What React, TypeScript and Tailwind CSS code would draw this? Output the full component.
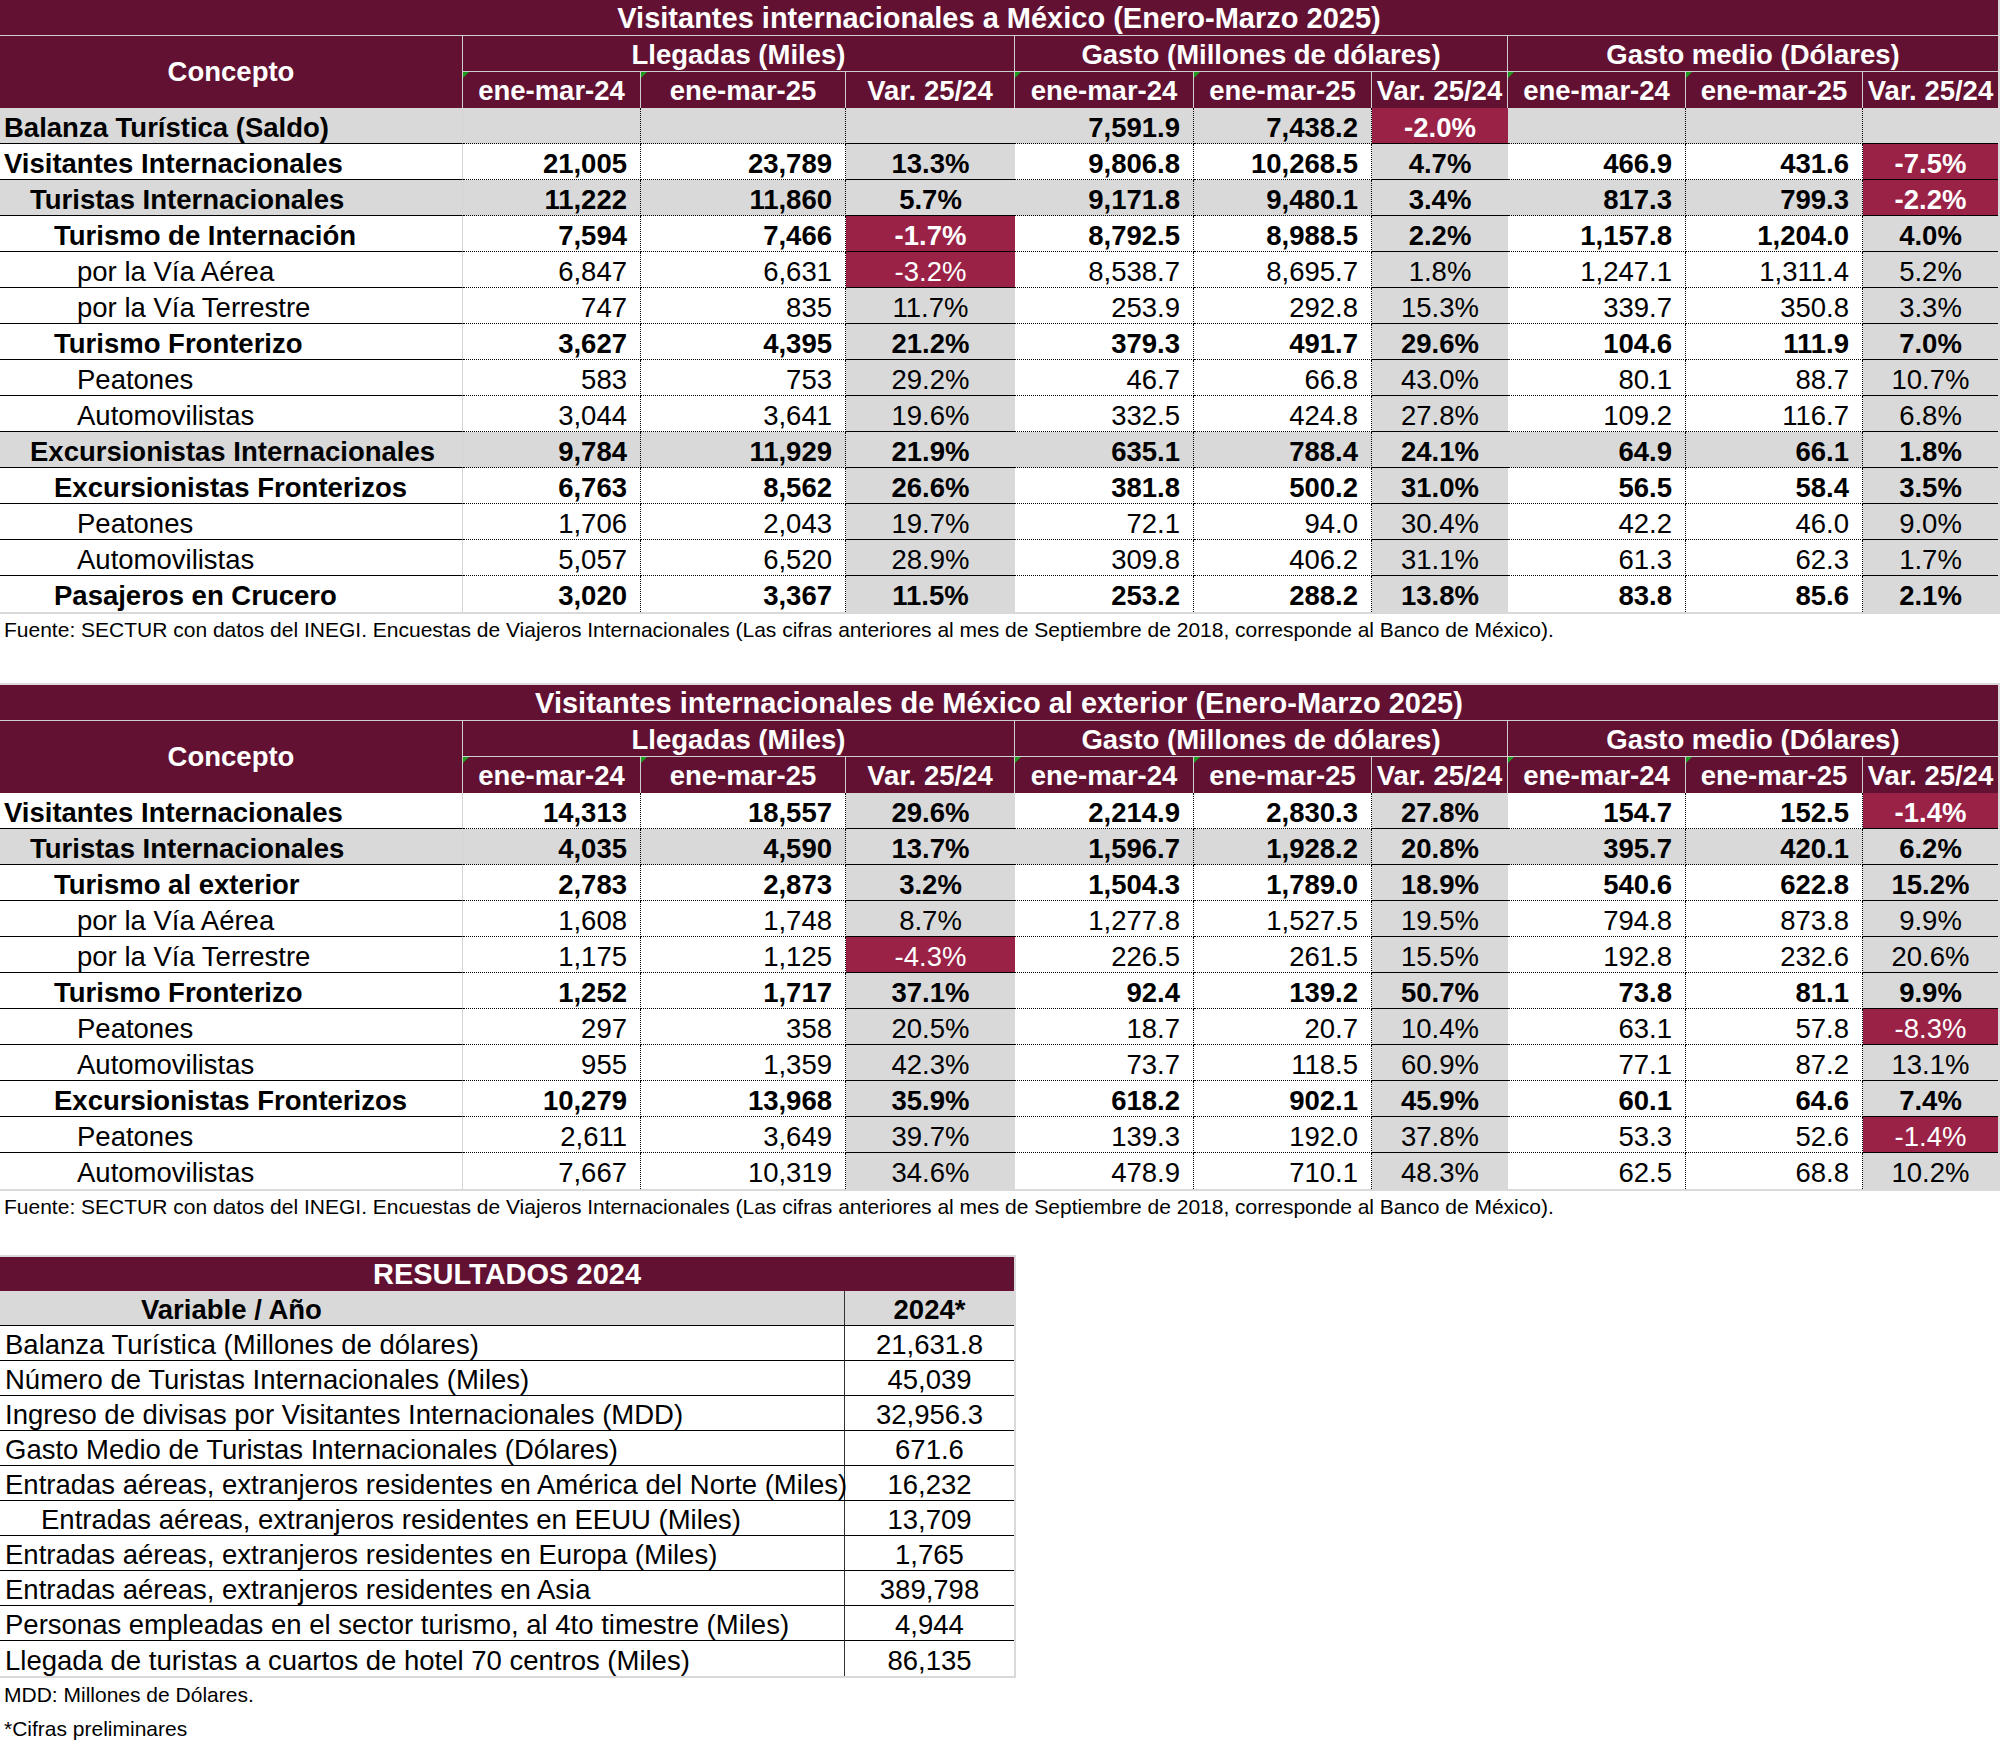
import React from "react";

type Row = {
    label: string;
    level: 0 | 1 | 2 | 3;
    gray?: boolean;
    vals: string[];
    neg?: number[];
};

const tablaEntrada: Row[] = [
    { label: "Balanza Turística (Saldo)", level: 0, gray: true, vals: ["", "", "", "7,591.9", "7,438.2", "-2.0%", "", "", ""], neg: [5] },
    { label: "Visitantes Internacionales", level: 0, vals: ["21,005", "23,789", "13.3%", "9,806.8", "10,268.5", "4.7%", "466.9", "431.6", "-7.5%"], neg: [8] },
    { label: "Turistas Internacionales", level: 1, gray: true, vals: ["11,222", "11,860", "5.7%", "9,171.8", "9,480.1", "3.4%", "817.3", "799.3", "-2.2%"], neg: [8] },
    { label: "Turismo de Internación", level: 2, vals: ["7,594", "7,466", "-1.7%", "8,792.5", "8,988.5", "2.2%", "1,157.8", "1,204.0", "4.0%"], neg: [2] },
    { label: "por la Vía Aérea", level: 3, vals: ["6,847", "6,631", "-3.2%", "8,538.7", "8,695.7", "1.8%", "1,247.1", "1,311.4", "5.2%"], neg: [2] },
    { label: "por la Vía Terrestre", level: 3, vals: ["747", "835", "11.7%", "253.9", "292.8", "15.3%", "339.7", "350.8", "3.3%"] },
    { label: "Turismo Fronterizo", level: 2, vals: ["3,627", "4,395", "21.2%", "379.3", "491.7", "29.6%", "104.6", "111.9", "7.0%"] },
    { label: "Peatones", level: 3, vals: ["583", "753", "29.2%", "46.7", "66.8", "43.0%", "80.1", "88.7", "10.7%"] },
    { label: "Automovilistas", level: 3, vals: ["3,044", "3,641", "19.6%", "332.5", "424.8", "27.8%", "109.2", "116.7", "6.8%"] },
    { label: "Excursionistas Internacionales", level: 1, gray: true, vals: ["9,784", "11,929", "21.9%", "635.1", "788.4", "24.1%", "64.9", "66.1", "1.8%"] },
    { label: "Excursionistas Fronterizos", level: 2, vals: ["6,763", "8,562", "26.6%", "381.8", "500.2", "31.0%", "56.5", "58.4", "3.5%"] },
    { label: "Peatones", level: 3, vals: ["1,706", "2,043", "19.7%", "72.1", "94.0", "30.4%", "42.2", "46.0", "9.0%"] },
    { label: "Automovilistas", level: 3, vals: ["5,057", "6,520", "28.9%", "309.8", "406.2", "31.1%", "61.3", "62.3", "1.7%"] },
    { label: "Pasajeros en Crucero", level: 2, vals: ["3,020", "3,367", "11.5%", "253.2", "288.2", "13.8%", "83.8", "85.6", "2.1%"] },
];

const tablaSalida: Row[] = [
    { label: "Visitantes Internacionales", level: 0, vals: ["14,313", "18,557", "29.6%", "2,214.9", "2,830.3", "27.8%", "154.7", "152.5", "-1.4%"], neg: [8] },
    { label: "Turistas Internacionales", level: 1, gray: true, vals: ["4,035", "4,590", "13.7%", "1,596.7", "1,928.2", "20.8%", "395.7", "420.1", "6.2%"] },
    { label: "Turismo al exterior", level: 2, vals: ["2,783", "2,873", "3.2%", "1,504.3", "1,789.0", "18.9%", "540.6", "622.8", "15.2%"] },
    { label: "por la Vía Aérea", level: 3, vals: ["1,608", "1,748", "8.7%", "1,277.8", "1,527.5", "19.5%", "794.8", "873.8", "9.9%"] },
    { label: "por la Vía Terrestre", level: 3, vals: ["1,175", "1,125", "-4.3%", "226.5", "261.5", "15.5%", "192.8", "232.6", "20.6%"], neg: [2] },
    { label: "Turismo Fronterizo", level: 2, vals: ["1,252", "1,717", "37.1%", "92.4", "139.2", "50.7%", "73.8", "81.1", "9.9%"] },
    { label: "Peatones", level: 3, vals: ["297", "358", "20.5%", "18.7", "20.7", "10.4%", "63.1", "57.8", "-8.3%"], neg: [8] },
    { label: "Automovilistas", level: 3, vals: ["955", "1,359", "42.3%", "73.7", "118.5", "60.9%", "77.1", "87.2", "13.1%"] },
    { label: "Excursionistas Fronterizos", level: 2, vals: ["10,279", "13,968", "35.9%", "618.2", "902.1", "45.9%", "60.1", "64.6", "7.4%"] },
    { label: "Peatones", level: 3, vals: ["2,611", "3,649", "39.7%", "139.3", "192.0", "37.8%", "53.3", "52.6", "-1.4%"], neg: [8] },
    { label: "Automovilistas", level: 3, vals: ["7,667", "10,319", "34.6%", "478.9", "710.1", "48.3%", "62.5", "68.8", "10.2%"] },
];

const resultados = [
    { label: "Balanza Turística (Millones de dólares)", value: "21,631.8" },
    { label: "Número de Turistas Internacionales (Miles)", value: "45,039" },
    { label: "Ingreso de divisas por Visitantes Internacionales (MDD)", value: "32,956.3" },
    { label: "Gasto Medio de Turistas Internacionales (Dólares)", value: "671.6" },
    { label: "Entradas aéreas, extranjeros residentes en América del Norte (Miles)", value: "16,232" },
    { label: "Entradas aéreas, extranjeros residentes en EEUU (Miles)", value: "13,709", indent: true },
    { label: "Entradas aéreas, extranjeros residentes en Europa (Miles)", value: "1,765" },
    { label: "Entradas aéreas, extranjeros residentes en Asia", value: "389,798" },
    { label: "Personas empleadas en el sector turismo, al 4to timestre (Miles)", value: "4,944" },
    { label: "Llegada de turistas a cuartos de hotel 70 centros (Miles)", value: "86,135" },
];

const indent = ["pl-[4px]", "pl-[30px]", "pl-[54px]", "pl-[77px]"];
const fuente =
    "Fuente: SECTUR con datos del INEGI. Encuestas de Viajeros Internacionales (Las cifras anteriores al mes de Septiembre de 2018, corresponde al Banco de México).";

function Triangulo() {
    return (
        <span className="absolute left-0 top-0 h-0 w-0 border-t-[6px] border-r-[6px] border-t-[#1f9a1f] border-r-transparent" />
    );
}

function Encabezado({ titulo }: { titulo: string }) {
    const sub = ["ene-mar-24", "ene-mar-25", "Var. 25/24"];
    return (
        <>
            <div className="col-span-10 flex h-[36px] items-center justify-center border-b border-[#cfcfcf] bg-[#621132] pt-[2px] text-[29px] font-bold whitespace-nowrap text-white">
                {titulo}
            </div>
            <div className="row-span-2 flex items-center justify-center border-r border-[#cfcfcf] bg-[#621132] font-bold text-white">
                Concepto
            </div>
            {["Llegadas (Miles)", "Gasto (Millones de dólares)", "Gasto medio (Dólares)"].map((g, i) => (
                <div
                    key={g}
                    className={`col-span-3 flex h-[36px] items-center justify-center border-b border-[#cfcfcf] bg-[#621132] pt-[2px] font-bold text-white ${i < 2 ? "border-r" : ""}`}
                >
                    {g}
                </div>
            ))}
            {[0, 1, 2].map((g) =>
                sub.map((s, j) => (
                    <div
                        key={`${g}-${j}`}
                        className={`relative flex h-[36px] items-center justify-center bg-[#621132] pt-[2px] font-bold whitespace-nowrap text-white ${g * 3 + j < 8 ? "border-r border-[#cfcfcf]" : ""}`}
                    >
                        {j < 2 && <Triangulo />}
                        {s}
                    </div>
                ))
            )}
        </>
    );
}

function Fila({ row, last }: { row: Row; last: boolean }) {
    const bold = row.level < 3 ? "font-bold" : "";
    const bottom = last ? "" : "border-b border-b-black";
    return (
        <>
            <div
                className={`flex h-[36px] items-center whitespace-nowrap border-r border-r-[#d4d4d4] pt-[4px] ${indent[row.level]} ${bold} ${bottom} ${row.gray ? "bg-[#d9d9d9]" : "bg-white"}`}
            >
                {row.label}
            </div>
            {row.vals.map((v, i) => {
                const isVar = i % 3 === 2;
                const neg = row.neg?.includes(i);
                const bg = neg ? "bg-[#9b2247] text-white" : row.gray || isVar ? "bg-[#d9d9d9]" : "bg-white";
                const align = isVar ? "justify-center" : "justify-end pr-[13px]";
                const dotted = isVar ? "" : "border-r border-dotted border-r-black";
                return (
                    <div
                        key={i}
                        className={`flex h-[36px] items-center whitespace-nowrap pt-[4px] ${align} ${bg} ${dotted} ${bold} ${bottom}`}
                    >
                        {v}
                    </div>
                );
            })}
        </>
    );
}

function Tabla({ titulo, rows, top }: { titulo: string; rows: Row[]; top?: boolean }) {
    return (
        <div
            className={`grid grid-cols-[463px_178px_205px_169px_179px_178px_136px_178px_177px_135px] border-r-2 border-b-2 border-[#d9d9d9] ${top ? "border-t-2" : ""}`}
        >
            <Encabezado titulo={titulo} />
            {rows.map((r, i) => (
                <Fila key={i} row={r} last={i === rows.length - 1} />
            ))}
        </div>
    );
}

export default function App() {
    return (
        <div className="flex w-[2000px] flex-col bg-white font-['Liberation_Sans',Arial,sans-serif] text-[27.5px] text-black">
            <Tabla titulo="Visitantes internacionales a México (Enero-Marzo 2025)" rows={tablaEntrada} />
            <p className="h-[32px] pl-[4px] text-[21px] leading-[32px] whitespace-nowrap">{fuente}</p>

            <div className="mt-[37px]">
                <Tabla titulo="Visitantes internacionales de México al exterior (Enero-Marzo 2025)" rows={tablaSalida} top />
            </div>
            <p className="h-[32px] pl-[4px] text-[21px] leading-[32px] whitespace-nowrap">{fuente}</p>

            <div className="mt-[32px] grid w-[1016px] grid-cols-[845px_169px] border-t-2 border-r-2 border-b-2 border-[#d9d9d9]">
                <div className="col-span-2 flex h-[34px] items-center justify-center bg-[#621132] pt-[2px] text-[29px] font-bold text-white">
                    RESULTADOS 2024
                </div>
                <div className="flex h-[35px] items-center border-r border-b border-r-[#333] border-b-black bg-[#d9d9d9] pt-[3px] pl-[141px] font-bold">
                    Variable / Año
                </div>
                <div className="flex h-[35px] items-center justify-center border-b border-b-black bg-[#d9d9d9] pt-[3px] font-bold">
                    2024*
                </div>
                {resultados.map((r, i) => {
                    const bottom = i === resultados.length - 1 ? "" : "border-b border-b-black";
                    return (
                        <React.Fragment key={i}>
                            <div
                                className={`flex h-[35px] items-center whitespace-nowrap border-r border-r-[#333] pt-[4px] ${r.indent ? "pl-[41px]" : "pl-[5px]"} ${bottom}`}
                            >
                                {r.label}
                            </div>
                            <div className={`flex h-[35px] items-center justify-center pt-[4px] ${bottom}`}>{r.value}</div>
                        </React.Fragment>
                    );
                })}
            </div>
            <p className="h-[34px] pl-[4px] text-[21px] leading-[34px]">MDD: Millones de Dólares.</p>
            <p className="h-[34px] pl-[4px] text-[21px] leading-[34px]">*Cifras preliminares</p>
        </div>
    );
}
